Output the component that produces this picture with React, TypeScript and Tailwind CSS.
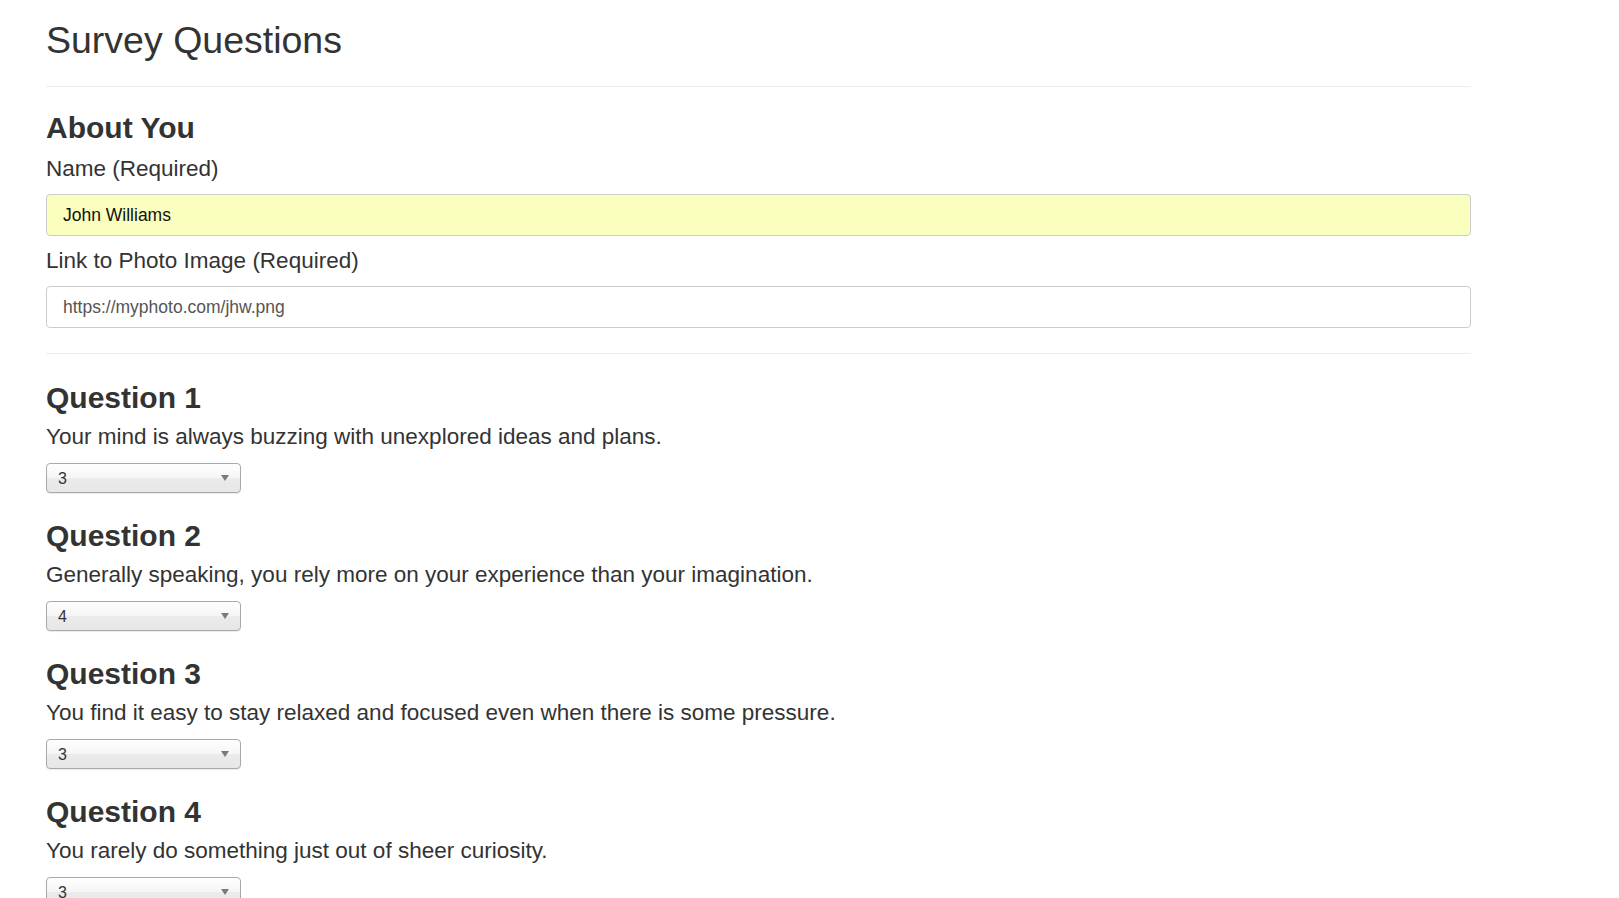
import React from "react";

const questions = [
  { id: 1, text: "Your mind is always buzzing with unexplored ideas and plans.", value: "3" },
  { id: 2, text: "Generally speaking, you rely more on your experience than your imagination.", value: "4" },
  { id: 3, text: "You find it easy to stay relaxed and focused even when there is some pressure.", value: "3" },
  { id: 4, text: "You rarely do something just out of sheer curiosity.", value: "3" },
];

const Select = ({ value }: { value: string }) => {
  return (
    <div className="relative w-[195px] h-[30px]">
      <select
        defaultValue={value}
        className="appearance-none w-full h-full pl-[11px] pt-[2px] text-[16px] leading-[26px] text-[#333] border border-[#a9a9a9] rounded-[4px] shadow-[0_1px_1px_rgba(0,0,0,0.08)] bg-[linear-gradient(to_bottom,#fefefe_0%,#f6f6f6_48%,#ebebeb_52%,#e7e7e7_100%)] outline-none"
      >
        {["1", "2", "3", "4", "5"].map((n) => (
          <option key={n} value={n}>
            {n}
          </option>
        ))}
      </select>
      {/* dropdown arrow */}
      <svg className="absolute right-[12px] top-[12px] pointer-events-none" width="8" height="6" viewBox="0 0 8 6">
        <path d="M0 0 H8 L4 6 Z" fill="#7a7a7a" />
      </svg>
    </div>
  );
};

export default function App() {
  return (
    <div className="bg-white min-h-screen text-[#333] font-['Liberation_Sans',Arial,sans-serif]">
      <div className="ml-[46px] w-[1425px] pt-[20px]">
        {/* Page header */}
        <h1 className="text-[37.5px] leading-[40px] font-normal">Survey Questions</h1>
        <div className="mt-[26px] border-t border-[#eee]" />

        {/* About you */}
        <h2 className="mt-[24px] text-[30px] leading-[33px] font-bold">About You</h2>
        <label className="block mt-[12px] text-[22.5px] leading-[26px]">Name (Required)</label>
        <input
          defaultValue="John Williams"
          className="block mt-[12px] w-full h-[42px] px-[16px] text-[17.5px] text-[#111] bg-[#faffbd] border border-[#ccc] rounded-[4px] outline-none"
        />
        <label className="block mt-[12px] text-[22.5px] leading-[26px]">Link to Photo Image (Required)</label>
        <input
          defaultValue="https://myphoto.com/jhw.png"
          className="block mt-[12px] w-full h-[42px] px-[16px] text-[17.5px] text-[#555] bg-white border border-[#ccc] rounded-[4px] outline-none"
        />
        <div className="mt-[25px] border-t border-[#eee]" />

        {/* Questions */}
        <div className="pt-[27px] flex flex-col gap-[26px]">
          {questions.map((q) => (
            <div key={q.id}>
              <h2 className="text-[30px] leading-[33px] font-bold">Question {q.id}</h2>
              <p className="mt-[10px] text-[22.5px] leading-[26px]">{q.text}</p>
              <div className="mt-[13px]">
                <Select value={q.value} />
              </div>
            </div>
          ))}
        </div>
      </div>
    </div>
  );
}
